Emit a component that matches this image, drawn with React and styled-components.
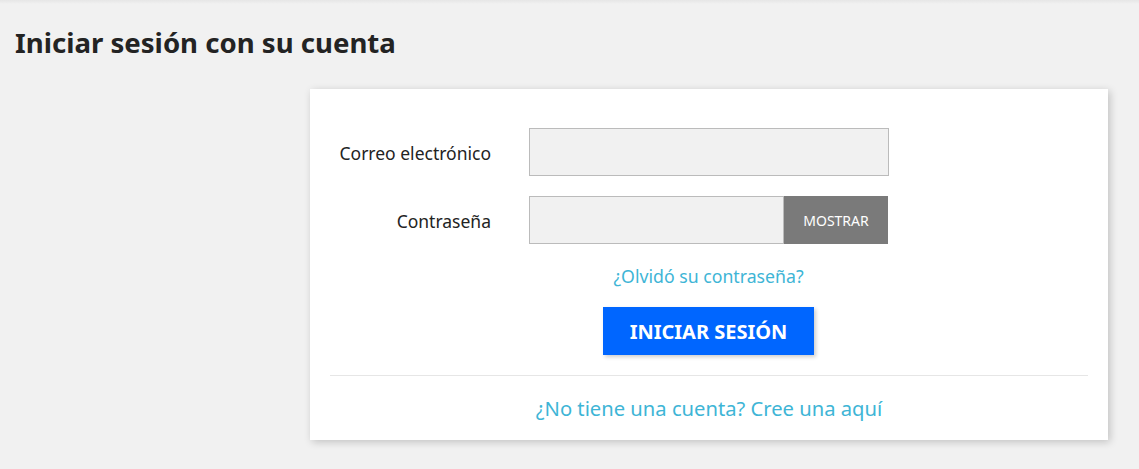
import React from "react";
import styled, { createGlobalStyle } from "styled-components";

const Global = createGlobalStyle`
  html, body { margin: 0; padding: 0; }
  body {
    background: #f1f1f1;
    font-family: "Noto Sans", "Open Sans", sans-serif;
    color: #232323;
  }
  * { box-sizing: border-box; }
`;

const Page = styled.div`
  min-height: 469px;
  background: linear-gradient(#e6e6e6 0, #f1f1f1 4px);
  padding: 24px 0 0 15px;
`;

const Title = styled.h1`
  margin: 0 0 29px 0;
  font-size: 27.6px;
  line-height: 36px;
  font-weight: 700;
  color: #232323;
`;

const Card = styled.section`
  margin-left: 295px;
  width: 798px;
  background: #fff;
  box-shadow: 2px 2px 8px 0 rgba(0, 0, 0, 0.2);
  padding: 39px 20px 0 20px;
  height: 351px;
`;

const Form = styled.form`
  display: grid;
  grid-template-columns: 161px 360px;
  column-gap: 38px;
  row-gap: 20px;
  align-items: center;
`;

const Label = styled.label`
  text-align: right;
  font-size: 17.5px;
  line-height: 24px;
  padding-top: 1px;
  color: #232323;
  white-space: nowrap;
`;

const Input = styled.input`
  display: block;
  width: ${(p) => p.$w || "100%"};
  height: 48px;
  background: #f1f1f1;
  border: 1px solid #bbb;
  outline: none;
  padding: 0 12px;
  font-size: 16px;
  font-family: inherit;
`;

const Group = styled.div`
  display: flex;
  width: 359px;
`;

const ShowButton = styled.button`
  width: 104px;
  height: 48px;
  border: none;
  background: #7a7a7a;
  color: #fff;
  font-family: inherit;
  font-size: 14px;
  text-transform: uppercase;
  padding: 0;
`;

const Center = styled.div`
  grid-column: 2;
  margin-left: -1px;
  display: flex;
  flex-direction: column;
  align-items: center;
`;

const Link = styled.a`
  color: #3eb5d6;
  text-decoration: none;
  font-size: ${(p) => p.$size || "17.7px"};
  line-height: 24px;
  white-space: nowrap;
`;

const Submit = styled.button`
  margin-top: 19px;
  width: 211px;
  height: 48px;
  border: none;
  background: #0066ff;
  color: #fff;
  font-family: inherit;
  font-weight: 700;
  font-size: 20px;
  text-transform: uppercase;
  box-shadow: 2px 2px 4px 0 rgba(0, 0, 0, 0.2);
`;

const Divider = styled.hr`
  margin: 20px 0 0 0;
  border: none;
  border-top: 1px solid #e6e6e6;
`;

const Footer = styled.div`
  text-align: center;
  padding-top: 20px;
`;

export default function App() {
  return (
    <>
      <Global />
      <Page>
        <Title>Iniciar sesión con su cuenta</Title>
        <Card>
          <Form onSubmit={(e) => e.preventDefault()}>
            <Label>Correo electrónico</Label>
            <Input type="email" $w="360px" />
            <Label>Contraseña</Label>
            <Group>
              <Input type="password" $w="255px" />
              <ShowButton type="button">Mostrar</ShowButton>
            </Group>
            <Center>
              <Link href="#">¿Olvidó su contraseña?</Link>
              <Submit type="submit">Iniciar sesión</Submit>
            </Center>
          </Form>
          <Divider />
          <Footer>
            <Link href="#" $size="20.2px">¿No tiene una cuenta? Cree una aquí</Link>
          </Footer>
        </Card>
      </Page>
    </>
  );
}
